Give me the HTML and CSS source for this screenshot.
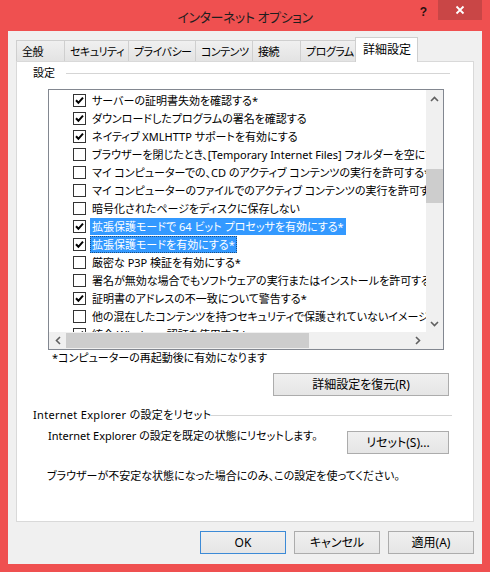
FILE: index.html
```html
<!DOCTYPE html>
<html lang="ja">
<head>
<meta charset="utf-8">
<title>インターネット オプション</title>
<link rel="stylesheet" href="styles.css">
</head>
<body>
<div class="window">
  <div class="titlebar">
    <div class="title">インターネット オプション</div>
    <div class="controls">
      <span class="help">?</span>
      <span class="close"><svg width="10" height="10" viewBox="0 0 10 10"><path d="M1.5 1.5 L8.5 8.5 M8.5 1.5 L1.5 8.5" stroke="#fff" stroke-width="1.8" fill="none"/></svg></span>
    </div>
  </div>
  <div class="client">
    <div class="tabs">
      <div class="tab">全般</div>
      <div class="tab">セキュリティ</div>
      <div class="tab">プライバシー</div>
      <div class="tab">コンテンツ</div>
      <div class="tab">接続</div>
      <div class="tab">プログラム</div>
      <div class="tab active">詳細設定</div>
    </div>
    <div class="panel">
      <div class="section-head">
        <span>設定</span><span class="rule"></span>
      </div>
      <div class="listbox">
        <div class="list-content">
          <div class="row"><span class="cb on"></span><span class="lbl">サーバーの証明書失効を確認する*</span></div>
          <div class="row"><span class="cb on"></span><span class="lbl">ダウンロードしたプログラムの署名を確認する</span></div>
          <div class="row"><span class="cb on"></span><span class="lbl">ネイティブ XMLHTTP サポートを有効にする</span></div>
          <div class="row"><span class="cb"></span><span class="lbl">ブラウザーを閉じたとき、[Temporary Internet Files] フォルダーを空にする</span></div>
          <div class="row"><span class="cb"></span><span class="lbl">マイ コンピューターでの、CD のアクティブ コンテンツの実行を許可する*</span></div>
          <div class="row"><span class="cb"></span><span class="lbl">マイ コンピューターのファイルでのアクティブ コンテンツの実行を許可する*</span></div>
          <div class="row"><span class="cb"></span><span class="lbl">暗号化されたページをディスクに保存しない</span></div>
          <div class="row"><span class="cb on"></span><span class="lbl sel">拡張保護モードで 64 ビット プロセッサを有効にする*</span></div>
          <div class="row"><span class="cb on"></span><span class="lbl sel focus">拡張保護モードを有効にする*</span></div>
          <div class="row"><span class="cb"></span><span class="lbl">厳密な P3P 検証を有効にする*</span></div>
          <div class="row"><span class="cb"></span><span class="lbl">署名が無効な場合でもソフトウェアの実行またはインストールを許可する</span></div>
          <div class="row"><span class="cb on"></span><span class="lbl">証明書のアドレスの不一致について警告する*</span></div>
          <div class="row"><span class="cb"></span><span class="lbl">他の混在したコンテンツを持つセキュリティで保護されていないイメージをブロックする</span></div>
          <div class="row"><span class="cb on"></span><span class="lbl">統合 Windows 認証を使用する*</span></div>
        </div>
        <div class="vscroll">
          <span class="arrow"><svg width="9" height="6" viewBox="0 0 9 6"><path d="M1 5 L4.5 1.5 L8 5" stroke="#606060" stroke-width="1.6" fill="none"/></svg></span>
          <span class="vtrack"><span class="vthumb"></span></span>
          <span class="arrow"><svg width="9" height="6" viewBox="0 0 9 6"><path d="M1 1 L4.5 4.5 L8 1" stroke="#606060" stroke-width="1.6" fill="none"/></svg></span>
        </div>
        <div class="hscroll">
          <span class="arrow"><svg width="6" height="9" viewBox="0 0 6 9"><path d="M5 1 L1.5 4.5 L5 8" stroke="#606060" stroke-width="1.6" fill="none"/></svg></span>
          <span class="htrack"><span class="hthumb"></span></span>
          <span class="arrow"><svg width="6" height="9" viewBox="0 0 6 9"><path d="M1 1 L4.5 4.5 L1 8" stroke="#606060" stroke-width="1.6" fill="none"/></svg></span>
        </div>
        <div class="corner"></div>
      </div>
      <div class="note">*コンピューターの再起動後に有効になります</div>
      <div class="restore-row"><button class="btn restore">詳細設定を復元(R)</button></div>
      <div class="section-head reset-head">
        <span>Internet Explorer の設定をリセット</span><span class="rule"></span>
      </div>
      <div class="reset-row">
        <span class="reset-text">Internet Explorer の設定を既定の状態にリセットします。</span>
        <button class="btn reset">リセット(S)...</button>
      </div>
      <div class="warn">ブラウザーが不安定な状態になった場合にのみ、この設定を使ってください。</div>
    </div>
    <div class="footer">
      <button class="btn dlg default">OK</button>
      <button class="btn dlg">キャンセル</button>
      <button class="btn dlg">適用(A)</button>
    </div>
  </div>
</div>
</body>
</html>
```
FILE: styles.css
```css
* { box-sizing: border-box; }
html, body { margin: 0; padding: 0; }
body {
  width: 490px;
  height: 572px;
  overflow: hidden;
  font-family: "Noto Sans", "Noto Sans CJK JP", sans-serif;
  font-size: 11px;
  color: #000;
  font-feature-settings: "palt";
}
.window {
  width: 490px;
  height: 572px;
  background: #ef5050;
  display: flex;
  flex-direction: column;
}
.titlebar {
  height: 31px;
  flex: none;
  display: grid;
  grid-template-columns: 1fr auto 1fr;
  padding: 0 8px;
}
.title {
  grid-column: 2;
  font-size: 13px;
  letter-spacing: -0.4px;
  line-height: 16px;
  padding-top: 9px;
  color: #1e1e1e;
  white-space: nowrap;
}
.controls {
  grid-column: 3;
  display: flex;
  justify-content: flex-end;
  align-items: flex-start;
}
.help {
  font-family: "Liberation Sans", sans-serif;
  font-weight: bold;
  font-size: 12px;
  line-height: 14px;
  margin-top: 5px;
  margin-right: 11px;
  color: #2a1010;
}
.close {
  width: 44px;
  height: 20px;
  background: #c94646;
  display: flex;
  align-items: center;
  justify-content: center;
}
.close svg { display: block; }
.client {
  flex: 1;
  margin: 0 8px 8px;
  background: #f0f0f0;
  padding: 6px 8px 0;
  display: flex;
  flex-direction: column;
}
.tabs {
  display: grid;
  grid-template-columns: 48px 64px 67px 57px 48px 55px 63px;
  align-items: end;
  height: 25px;
  margin-bottom: -1px;
  position: relative;
  z-index: 1;
}
.tab {
  height: 21px;
  margin-bottom: 1px;
  border: 1px solid #cfcfcf;
  border-bottom: none;
  border-right: none;
  background: linear-gradient(#f0f0f0, #e3e3e3);
  padding: 2px 0 0 5px;
  line-height: 18px;
  font-size: 11px;
  letter-spacing: -0.5px;
  white-space: nowrap;
  overflow: hidden;
}
.tab.active + .tab, .tab:last-child { border-right: 1px solid #cfcfcf; }
.tab.active {
  height: 25px;
  margin-bottom: 0;
  background: #fff;
  border-right: 1px solid #cfcfcf;
  padding: 3px 0 0 7px;
  font-size: 12px;
  letter-spacing: 0;
}
.panel {
  height: 461px;
  background: #fff;
  border: 1px solid #d9d9d9;
  display: flex;
  flex-direction: column;
}
.section-head {
  display: flex;
  align-items: center;
  gap: 11px;
  line-height: 18px;
  margin-top: 2px;
  padding: 0 23px 0 16px;
  white-space: nowrap;
}
.rule {
  flex: 1;
  height: 1px;
  background: #d5d5d5;
}
.listbox {
  margin: 7px 0 0 31px;
  width: 396px;
  height: 261px;
  border: 1px solid #828790;
  display: grid;
  grid-template-columns: 1fr 17px;
  grid-template-rows: 1fr 17px;
}
.list-content {
  overflow: hidden;
  white-space: nowrap;
  padding-top: 1px;
}
.row {
  height: 18px;
  display: flex;
  align-items: center;
  padding-left: 24px;
}
.cb {
  width: 13px;
  height: 13px;
  flex: none;
  border: 1px solid #333;
  background: #fff;
  margin-right: 4px;
}
.cb.on {
  background: #fff url("data:image/svg+xml,%3Csvg xmlns='http://www.w3.org/2000/svg' width='11' height='11' viewBox='0 0 11 11'%3E%3Cpath d='M2 5.3 L4.4 7.8 L9 2.6' stroke='%23000' stroke-width='2' fill='none'/%3E%3C/svg%3E") no-repeat center;
}
.lbl {
  padding: 0 2px;
  line-height: 17px;
}
.lbl.sel {
  background: #3399ff;
  color: #fff;
}
.lbl.focus {
  outline: 1px dotted #1a4f86;
  outline-offset: -1px;
}
.vscroll {
  background: #f0f0f0;
  display: flex;
  flex-direction: column;
}
.vtrack {
  flex: 1;
  display: flex;
  flex-direction: column;
  padding-top: 62px;
}
.vthumb {
  height: 34px;
  background: #cdcdcd;
}
.hscroll {
  background: #f0f0f0;
  display: flex;
}
.htrack {
  flex: 1;
  display: flex;
  padding: 1px 0;
}
.hthumb {
  width: 243px;
  background: #cdcdcd;
}
.arrow {
  width: 17px;
  height: 17px;
  flex: none;
  display: flex;
  align-items: center;
  justify-content: center;
}
.arrow svg { display: block; }
.corner { background: #f0f0f0; }
.note {
  margin: 0 0 0 35px;
  line-height: 16px;
}
.restore-row {
  display: flex;
  justify-content: flex-end;
  margin-top: 7px;
  padding-right: 24px;
}
.btn {
  font-family: inherit;
  font-size: 12px;
  font-feature-settings: "palt";
  color: #000;
  background: linear-gradient(#f0f0f0, #e5e5e5);
  border: 1px solid #acacac;
  border-radius: 0;
  padding: 0;
  margin: 0;
  height: 23px;
  line-height: 20px;
}
.restore { width: 176px; }
.reset-head {
  margin-top: 10px;
  gap: 0;
  padding-right: 21px;
}
.reset-head span:first-child { letter-spacing: 0.3px; }
.reset-row {
  display: flex;
  align-items: flex-start;
  margin-top: 3px;
  padding: 0 24px 0 31px;
}
.reset-text { line-height: 18px; }
.reset { width: 102px; margin-left: auto; margin-top: 4px; }
.warn {
  margin: 13px 0 0 30px;
  line-height: 18px;
}
.footer {
  display: flex;
  justify-content: flex-end;
  gap: 8px;
  margin-top: 9px;
}
.dlg { width: 86px; }
.default { border-color: #3c8ad6; }
```
